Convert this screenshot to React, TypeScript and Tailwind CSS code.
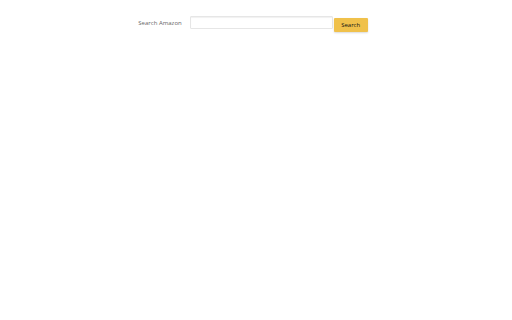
export default function App() {
  return (
    <div className="w-[512px] h-[320px] bg-white font-['Open_Sans',sans-serif]">
      <form className="flex items-start justify-center pt-4 pr-[6px]">
        <label className="text-[6px] leading-[8px] text-[#666] mr-2 mt-[3px]">Search Amazon</label>
        <input
          type="text"
          className="w-[143px] h-[13px] border border-[#e6e6e6] rounded-[1px] shadow-[inset_0_1px_1px_rgba(0,0,0,0.06)] outline-none"
        />
        <button
          type="button"
          className="w-[34px] h-[14px] mt-[2px] ml-[1px] bg-[#f0c14b] rounded-[1px] shadow-[0_1px_2px_rgba(0,0,0,0.15)] text-[6px] text-[#111] flex items-center justify-center"
        >
          Search
        </button>
      </form>
    </div>
  );
}
